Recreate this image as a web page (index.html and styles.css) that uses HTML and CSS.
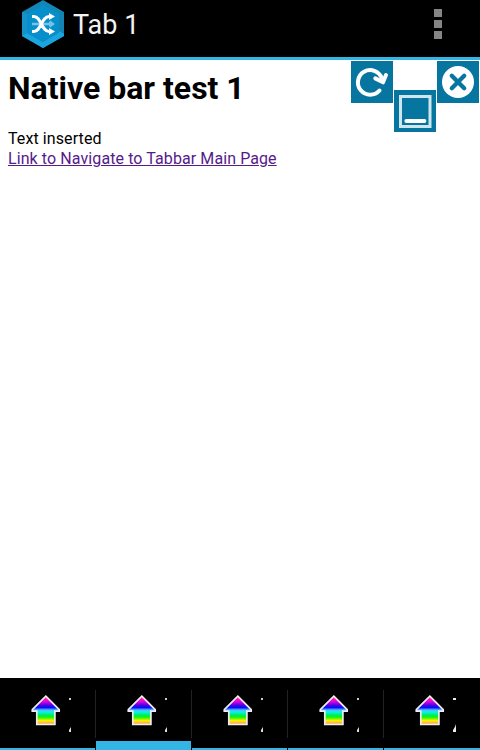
FILE: index.html
```
<!DOCTYPE html>
<html lang="en">
<head>
<meta charset="utf-8">
<title>Tab 1</title>
<link rel="stylesheet" href="styles.css">
</head>
<body>
<svg class="defs" aria-hidden="true">
  <defs>
    <linearGradient id="rainbow" x1="0" y1="18" x2="0" y2="47" gradientUnits="userSpaceOnUse">
      <stop offset="0" stop-color="#ff5060"/>
      <stop offset=".1" stop-color="#ff2090"/>
      <stop offset=".2" stop-color="#d800f0"/>
      <stop offset=".32" stop-color="#5000e0"/>
      <stop offset=".4" stop-color="#0010ff"/>
      <stop offset=".48" stop-color="#60b0ff"/>
      <stop offset=".55" stop-color="#00f8f0"/>
      <stop offset=".66" stop-color="#00e860"/>
      <stop offset=".74" stop-color="#20f800"/>
      <stop offset=".85" stop-color="#fff000"/>
      <stop offset=".93" stop-color="#ffb050"/>
      <stop offset="1" stop-color="#ffa070"/>
    </linearGradient>
    <symbol id="house" viewBox="0 0 95 60">
      <path d="M45.800 18.200 59.200 31.600V33.200H54.900V46.500H36.800V33.200H32.300V31.600Z" fill="url(#rainbow)" stroke="#f0ecf0" stroke-width="1.700"/>
      <path d="M69 20h2v2h-2z" fill="#ccc"/>
      <path d="M71 49v5h-2v-2z" fill="#ddd"/>
    </symbol>
  </defs>
</svg>
<header class="bar">
  <svg class="logo" width="42" height="48" viewBox="0 0 42 48">
    <path d="M21 0 42 12V36L21 48 0 36V12Z" fill="#1186b7"/>
    <path d="M0 12 5 14V33L0 36Z" fill="#1592c7"/>
    <path d="M42 12 37 14V31L42 34Z" fill="#1283b3"/>
    <path d="M0 36 5 33 21 42 37 31 42 34V36L21 48Z" fill="#1ba5df"/>
    <path d="M21 5 37 14V33L21 42 5 33V14Z" fill="#078fcb"/>
    <path d="M10 24H30M27.500 21.500 31 24 27.500 26.500" fill="none" stroke="#73c4e7" stroke-width="2.300"/>
    <path d="M10 16.500H12C19 16.500 19.500 31.500 27 31.500H30M10 31.500H12C19 31.500 19.500 16.500 27 16.500H30" fill="none" stroke="#fff" stroke-width="3"/>
    <path d="M27 13 33 16.500 27 20ZM27 28 33 31.500 27 35Z" fill="#fff"/>
  </svg>
  <span class="title">Tab 1</span>
  <span class="more"><i></i><i></i><i></i></span>
</header>
<main class="page">
  <h1>Native bar test 1</h1>
  <p>Text inserted<br><a href="#">Link to Navigate to Tabbar Main Page</a></p>
  <div class="tools">
    <svg width="42" height="42" viewBox="0 0 42 42">
      <path d="M28.500 29.500A12.300 12.300 0 1 1 30.700 17" fill="none" stroke="#fff" stroke-width="4" stroke-linecap="round"/>
      <path d="M24.300 17.400 32 21.300 35 14" fill="none" stroke="#fff" stroke-width="4" stroke-linecap="round" stroke-linejoin="round"/>
    </svg>
    <svg class="low" width="42" height="42" viewBox="0 0 42 42">
      <rect x="6.500" y="6.500" width="29.500" height="30" fill="none" stroke="#cfe6ee" stroke-width="3"/>
      <path d="M12.300 31H30.500" stroke="#fff" stroke-width="3.800" stroke-linecap="round"/>
    </svg>
    <svg width="42" height="42" viewBox="0 0 42 42">
      <circle cx="21" cy="21" r="16" fill="#fff"/>
      <path d="M14.800 14.800 27.200 27.200M27.200 14.800 14.800 27.200" stroke="#0676a1" stroke-width="4.300" stroke-linecap="round"/>
    </svg>
  </div>
</main>
<nav class="tabs">
  <div class="tab"><svg width="95" height="60"><use href="#house"/></svg></div>
  <div class="tab active"><svg width="95" height="60"><use href="#house"/></svg></div>
  <div class="tab"><svg width="95" height="60"><use href="#house"/></svg></div>
  <div class="tab"><svg width="95" height="60"><use href="#house"/></svg></div>
  <div class="tab"><svg width="95" height="60"><use href="#house"/><path d="M69 20h3v2h-3zM72 46v8h-3v-2h1z" fill="#eee"/></svg></div>
</nav>
</body>
</html>
```
FILE: styles.css
```
* { box-sizing: border-box; }
body {
  margin: 0;
  height: 750px;
  display: flex;
  flex-direction: column;
  overflow: hidden;
  background: #fff;
  color: #000;
  font-family: Roboto, sans-serif;
}
svg { display: block; }
.defs { position: absolute; width: 0; height: 0; }
.bar {
  display: flex;
  height: 60px;
  flex: none;
  padding: 0 38px 0 22px;
  background: #000;
  border-bottom: 3px solid #33b5e5;
}
.title {
  margin-left: 9px;
  color: #f3f3f3;
  font-size: 27px;
  line-height: 51px;
}
.more {
  display: flex;
  flex-direction: column;
  gap: 3px;
  margin-left: auto;
  padding-top: 9px;
}
.more i { width: 8px; height: 8px; background: #858585; }
.page {
  flex: 1;
  position: relative;
  padding: 8px;
}
h1 {
  margin: 0;
  font-size: 32px;
  line-height: 40px;
  font-weight: 700;
}
p {
  margin: 21px 0 0;
  font-size: 16px;
  line-height: 20px;
  letter-spacing: 0.09px;
}
a { color: #551a8b; }
.tools {
  position: absolute;
  top: 1px;
  right: 1px;
  display: flex;
  gap: 1px;
}
.tools svg { background: #0676a1; }
.tools .low { margin-top: 29px; }
.tabs {
  display: grid;
  grid-template-columns: repeat(5, 95px);
  column-gap: 1px;
  flex: none;
  height: 72px;
  background: linear-gradient(#222, #222) 95px 12px / 1px 48px no-repeat,
    linear-gradient(#222, #222) 191px 12px / 1px 48px no-repeat,
    linear-gradient(#222, #222) 287px 12px / 1px 48px no-repeat,
    linear-gradient(#222, #222) 383px 12px / 1px 48px no-repeat, #000;
}
.tab { border-bottom: 2px solid #33b5e5; }
.tab:last-child { width: 96px; }
.active { border-bottom-width: 9px; }
```
